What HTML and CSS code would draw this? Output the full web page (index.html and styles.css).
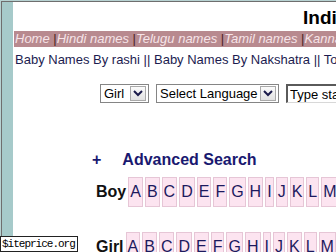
FILE: index.html
```html
<!DOCTYPE html>
<html lang="en">
<head>
  <meta charset="UTF-8">
  <meta name="viewport" content="width=device-width, initial-scale=1.0">
  <title>Indian Baby Names</title>
  <link rel="stylesheet" href="styles.css">
</head>
<body>

  <div class="frame">
    <div class="side"></div>
    <div class="main">
      <h1 class="title">Indian Baby Names</h1>

      <!-- Language menu -->
      <div class="nav">
        <a href="#">Home</a> <span class="sep">|</span><a href="#">Hindi names</a> <span class="sep">|</span><a href="#">Telugu names</a> <span class="sep">|</span><a href="#">Tamil names</a> <span class="sep">|</span><a href="#">Kannada names</a> <span class="sep">|</span><a href="#">Bengali names</a>
      </div>

      <div class="sublinks">
        <a href="#">Baby Names By rashi</a> || <a href="#">Baby Names By Nakshatra</a> || <a href="#">Top Baby Names</a>
      </div>

      <!-- Search -->
      <form class="search">
        <div class="combo">
          <select class="sel sel-gender">
            <option>Girl</option>
            <option>Boy</option>
          </select>
          <span class="drop"><svg width="10" height="7" viewBox="0 0 10 7"><polyline points="1,1 5,5 9,1" fill="none" stroke="#1c1c4c" stroke-width="2"/></svg></span>
        </div>
        <div class="combo">
          <select class="sel sel-lang">
            <option>Select Language</option>
            <option>Hindi</option>
            <option>Telugu</option>
          </select>
          <span class="drop"><svg width="10" height="7" viewBox="0 0 10 7"><polyline points="1,1 5,5 9,1" fill="none" stroke="#1c1c4c" stroke-width="2"/></svg></span>
        </div>
        <input class="query" type="text" value="Type starting letters">
      </form>

      <div class="advanced">
        <span class="plus">+</span><a href="#">Advanced Search</a>
      </div>

      <!-- Alphabet -->
      <div class="alpha">
        <div class="alpha-row">
          <span class="label">Boy</span>
          <a class="letter" href="#">A</a><a class="letter" href="#">B</a><a class="letter" href="#">C</a><a class="letter" href="#">D</a><a class="letter" href="#">E</a><a class="letter" href="#">F</a><a class="letter" href="#">G</a><a class="letter" href="#">H</a><a class="letter" href="#">I</a><a class="letter" href="#">J</a><a class="letter" href="#">K</a><a class="letter" href="#">L</a><a class="letter" href="#">M</a><a class="letter" href="#">N</a>
        </div>
        <div class="alpha-row">
          <span class="label">Girl</span>
          <a class="letter" href="#">A</a><a class="letter" href="#">B</a><a class="letter" href="#">C</a><a class="letter" href="#">D</a><a class="letter" href="#">E</a><a class="letter" href="#">F</a><a class="letter" href="#">G</a><a class="letter" href="#">H</a><a class="letter" href="#">I</a><a class="letter" href="#">J</a><a class="letter" href="#">K</a><a class="letter" href="#">L</a><a class="letter" href="#">M</a><a class="letter" href="#">N</a>
        </div>
      </div>
    </div>
  </div>

  <div class="badge">$iteprice.org</div>

</body>
</html>
```

FILE: styles.css
```css
body {
  font-family: "Liberation Sans", Arial, sans-serif;
  margin: 0;
  padding: 0;
  background-color: #b7d2d2;
  overflow: hidden;
  height: 252px;
}

.frame {
  display: flex;
  margin: 1px 0 0 1px;
  border-top: 1px solid #6e6e6e;
  border-left: 1px solid #6e6e6e;
  min-height: 100vh;
  background-color: #fff;
}

.side {
  width: 11px;
  flex-shrink: 0;
  background-color: #a6caca;
}

.main {
  flex: 1;
  min-width: 0;
  overflow: hidden;
  white-space: nowrap;
}

.title {
  margin: 0;
  padding: 4px 0 0 290px;
  font-size: 19px;
  line-height: 24px;
  color: #000;
}

/* Menu bar */
.nav {
  margin: 1px 0 0 1px;
  padding-left: 1px;
  height: 16px;
  line-height: 16px;
  font-size: 13px;
  font-style: italic;
  background-color: #b88a8f;
  color: #f6e4e8;
}

.nav a {
  color: #f6e4e8;
  text-decoration: none;
}

.nav .sep {
  font-style: normal;
  color: #4a2224;
}

.sublinks {
  margin-top: 5px;
  padding-left: 2px;
  font-size: 13px;
  line-height: 16px;
  color: #1c1c50;
}

.sublinks a {
  color: #1c1c50;
  text-decoration: none;
}

/* Search form */
.search {
  display: flex;
  gap: 7px;
  margin: 16px 0 0;
  padding-left: 87px;
}

.combo {
  display: flex;
  align-items: center;
  gap: 2px;
  height: 17px;
  padding: 0 2px 0 3px;
  border: 1px solid #858585;
  background-color: #fff;
}

.sel {
  appearance: none;
  -webkit-appearance: none;
  border: none;
  padding: 0;
  margin: 0;
  background: transparent;
  font-family: "Liberation Sans", Arial, sans-serif;
  font-size: 13px;
  color: #000;
  height: 17px;
  outline: none;
}

.sel-gender {
  width: 24px;
}

.sel-lang {
  width: 98px;
}

.drop {
  display: flex;
  align-items: center;
  justify-content: center;
  width: 14px;
  height: 13px;
  border: 1px solid #a9a9a9;
  background: linear-gradient(#fbfbfb, #e2e2e2);
}

.query {
  box-sizing: border-box;
  width: 160px;
  height: 19px;
  padding: 0 2px;
  margin: 0;
  font-family: "Liberation Sans", Arial, sans-serif;
  font-size: 13px;
  color: #000;
  border-top: 2px solid #5a5a5a;
  border-left: 2px solid #5a5a5a;
  border-right: 1px solid #d8d8d8;
  border-bottom: 1px solid #d8d8d8;
}

.advanced {
  margin-top: 47px;
  padding-left: 79px;
  font-size: 16px;
  font-weight: bold;
  line-height: 19px;
  color: #191970;
}

.advanced .plus {
  margin-right: 21px;
}

.advanced a {
  color: #191970;
  text-decoration: none;
}

/* Alphabet rows */
.alpha {
  margin-top: 8px;
  padding-left: 83px;
  display: flex;
  flex-direction: column;
  gap: 25px;
}

.alpha-row {
  display: flex;
  align-items: center;
  gap: 2px;
  height: 30px;
}

.alpha-row .label {
  width: 31px;
  font-size: 16px;
  font-weight: bold;
  color: #111;
}

.letter {
  display: flex;
  align-items: center;
  height: 28px;
  padding: 0 1px;
  border: 1px solid #e6c6d6;
  background-color: #fce4f0;
  color: #1c1a5e;
  font-size: 16px;
  text-decoration: none;
}

/* Watermark */
.badge {
  position: absolute;
  left: 0;
  bottom: 0;
  width: 75px;
  height: 14px;
  border: 1px solid #222;
  background-color: #fff;
  font-family: "Liberation Mono", monospace;
  font-size: 11px;
  letter-spacing: -1px;
  line-height: 14px;
  padding-left: 1px;
  color: #000;
}
```
